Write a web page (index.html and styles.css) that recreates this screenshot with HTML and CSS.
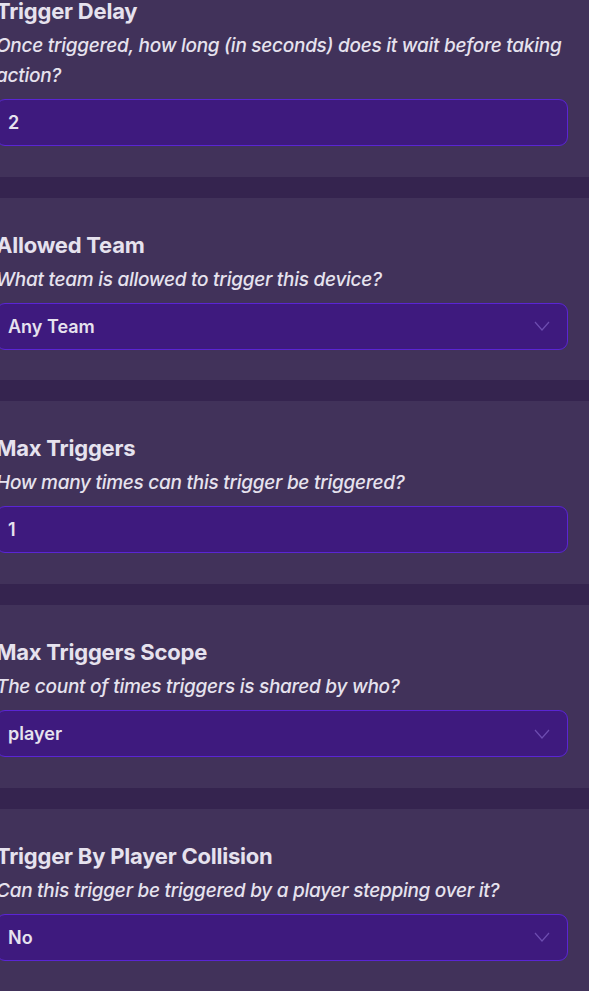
FILE: index.html
```html
<!DOCTYPE html>
<html lang="en">
<head>
<meta charset="utf-8">
<title>Trigger settings</title>
<link rel="stylesheet" href="styles.css">
</head>
<body>
<div class="panel">
  <section class="field">
    <h3 class="field-title">Trigger Delay</h3>
    <p class="field-desc">Once triggered, how long (in seconds) does it wait before taking action?</p>
    <div class="control"><span class="value">2</span></div>
  </section>
  <div class="divider"></div>
  <section class="field">
    <h3 class="field-title">Allowed Team</h3>
    <p class="field-desc">What team is allowed to trigger this device?</p>
    <div class="control select"><span class="value">Any Team</span>
      <svg class="chevron" viewBox="0 0 16 10" width="16" height="10"><path d="M1 1 L8 9 L15 1" fill="none" stroke="currentColor" stroke-width="1.2"/></svg>
    </div>
  </section>
  <div class="divider"></div>
  <section class="field">
    <h3 class="field-title">Max Triggers</h3>
    <p class="field-desc">How many times can this trigger be triggered?</p>
    <div class="control"><span class="value">1</span></div>
  </section>
  <div class="divider"></div>
  <section class="field">
    <h3 class="field-title">Max Triggers Scope</h3>
    <p class="field-desc">The count of times triggers is shared by who?</p>
    <div class="control select"><span class="value">player</span>
      <svg class="chevron" viewBox="0 0 16 10" width="16" height="10"><path d="M1 1 L8 9 L15 1" fill="none" stroke="currentColor" stroke-width="1.2"/></svg>
    </div>
  </section>
  <div class="divider"></div>
  <section class="field">
    <h3 class="field-title">Trigger By Player Collision</h3>
    <p class="field-desc">Can this trigger be triggered by a player stepping over it?</p>
    <div class="control select"><span class="value">No</span>
      <svg class="chevron" viewBox="0 0 16 10" width="16" height="10"><path d="M1 1 L8 9 L15 1" fill="none" stroke="currentColor" stroke-width="1.2"/></svg>
    </div>
  </section>
</div>
</body>
</html>
```
FILE: styles.css
```css
html, body {
  margin: 0;
  padding: 0;
  background: #41325a;
}
body {
  font-family: Inter, "Noto Sans", sans-serif;
  color: #e6e2ee;
  overflow: hidden;
}
.panel {
  margin: -36px 0 0 -4px;
}
.field {
  padding: 34px 21px 30.7px 0;
}
.field-title {
  margin: 0;
  font-size: 22px;
  font-weight: 700;
  line-height: 26px;
  letter-spacing: -0.22px;
}
.field-desc {
  margin: 7px 0 0;
  font-size: 19px;
  font-style: italic;
  font-weight: 500;
  line-height: 30px;
  letter-spacing: -0.27px;
}
.control {
  margin-top: 8px;
  height: 47px;
  box-sizing: border-box;
  border: 1px solid #5a25d4;
  border-radius: 9px;
  background: #3e1a7e;
  display: flex;
  align-items: center;
  justify-content: space-between;
  padding: 0 17px 0 11px;
}
.value {
  font-size: 18px;
  font-weight: 600;
  letter-spacing: 0;
  color: #e6e2ee;
}
.chevron {
  color: #6d4db0;
  display: block;
}
.divider {
  height: 21px;
  background: #35244f;
}
```
